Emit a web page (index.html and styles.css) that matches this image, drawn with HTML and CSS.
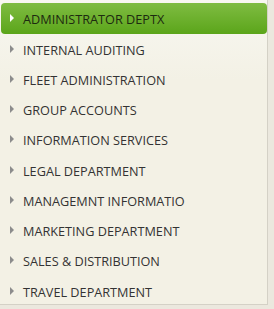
FILE: index.html
```html
<!DOCTYPE html>
<html lang="en">
<head>
    <meta charset="UTF-8">
    <title>Departments</title>
    <link rel="stylesheet" href="styles.css">
</head>
<body>
    <div class="panel">
        <ul class="menu">
            <li class="active"><span class="arrow"></span>ADMINISTRATOR DEPTX</li>
            <li><span class="arrow"></span>INTERNAL AUDITING</li>
            <li><span class="arrow"></span>FLEET ADMINISTRATION</li>
            <li><span class="arrow"></span>GROUP ACCOUNTS</li>
            <li><span class="arrow"></span>INFORMATION SERVICES</li>
            <li><span class="arrow"></span>LEGAL DEPARTMENT</li>
            <li><span class="arrow"></span>MANAGEMNT INFORMATIO</li>
            <li><span class="arrow"></span>MARKETING DEPARTMENT</li>
            <li><span class="arrow"></span>SALES &amp; DISTRIBUTION</li>
            <li><span class="arrow"></span>TRAVEL DEPARTMENT</li>
        </ul>
    </div>
</body>
</html>
```

FILE: styles.css
```css
body {
    margin: 0;
    background: #ebe8de;
    font-family: "Open Sans", "DejaVu Sans", sans-serif;
}
.panel {
    width: 268px;
    height: 305px;
    padding-top: 3px;
    box-sizing: border-box;
    background: linear-gradient(#f8f7f1, #f3f1e5 80px);
    border-right: 1px solid #d4d1c6;
    border-bottom: 1px solid #d4d1c6;
}
.menu {
    list-style: none;
    margin: 0;
    padding: 0 0 0 1px;
}
.menu li {
    display: flex;
    align-items: center;
    box-sizing: border-box;
    height: 30.25px;
    padding: 2px 0 0 9px;
    font-size: 12.7px;
    color: #333;
}
.menu li.active {
    height: 30.5px;
    color: #1d2a10;
    border-radius: 4px;
    background: linear-gradient(#7fbc42, #5ba51a);
}
.arrow {
    width: 0;
    height: 0;
    margin: -2px 9px 0 0;
    border-top: 4px solid transparent;
    border-bottom: 4px solid transparent;
    border-left: 4px solid #8c8c8c;
}
.active .arrow {
    border-left-color: #fff;
}
```
